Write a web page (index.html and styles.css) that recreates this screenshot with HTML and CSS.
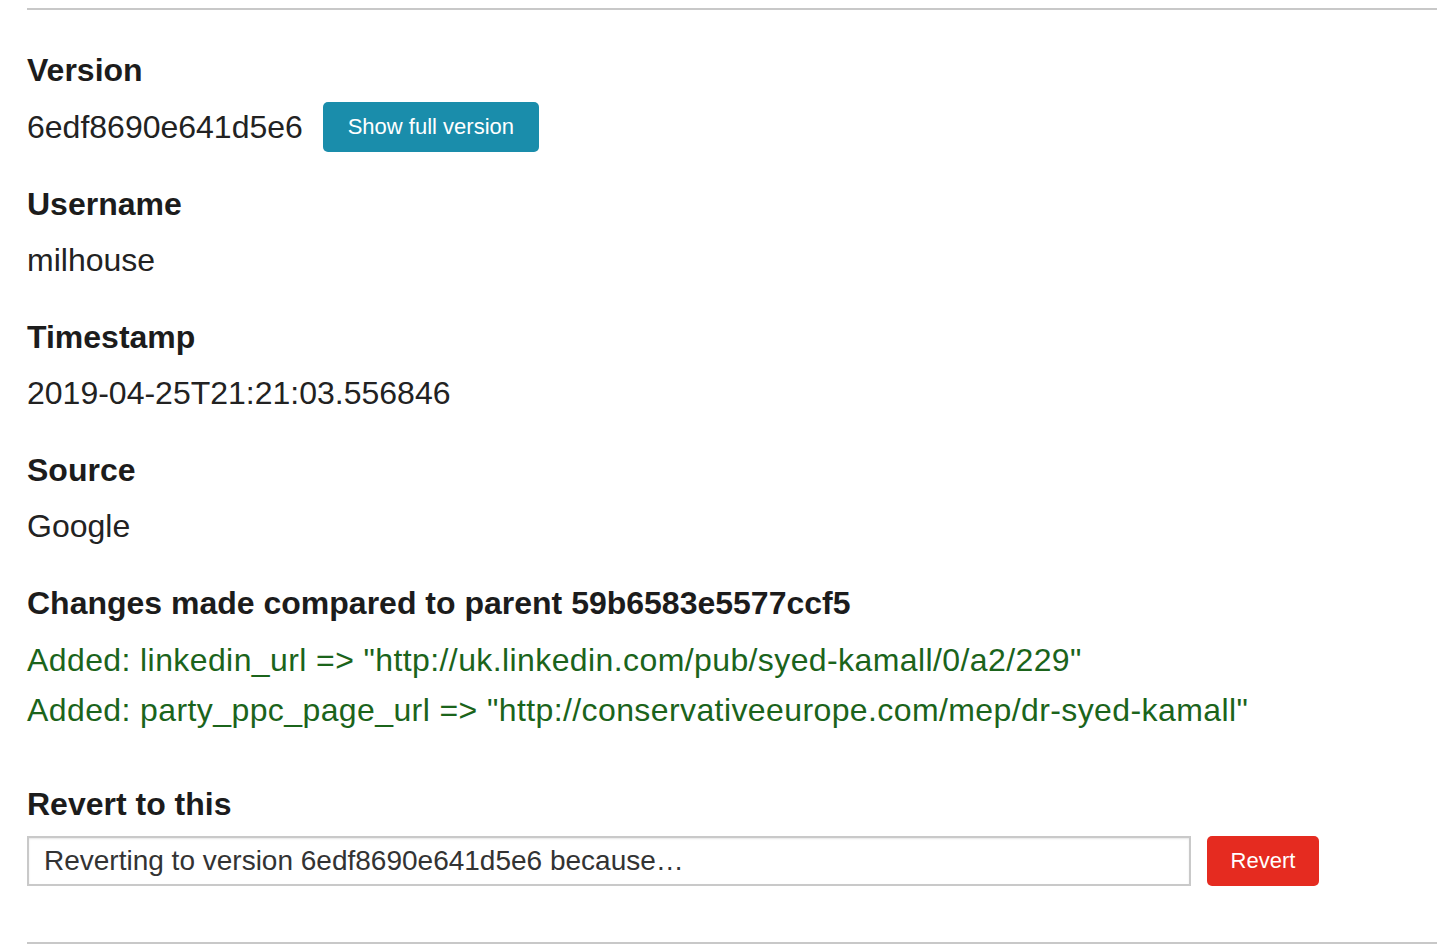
FILE: index.html
```html
<!DOCTYPE html>
<html lang="en">
<head>
<meta charset="utf-8">
<title>Version 6edf8690e641d5e6</title>
<link rel="stylesheet" href="styles.css">
</head>
<body>
<div class="page">
  <hr class="rule rule-top">
  <dl class="details">
    <dt class="label">Version</dt>
    <dd class="value version-row">
      <span class="version-id">6edf8690e641d5e6</span>
      <button class="btn btn-info" type="button">Show full version</button>
    </dd>

    <dt class="label">Username</dt>
    <dd class="value">milhouse</dd>

    <dt class="label">Timestamp</dt>
    <dd class="value">2019-04-25T21:21:03.556846</dd>

    <dt class="label">Source</dt>
    <dd class="value">Google</dd>

    <dt class="label">Changes made compared to parent 59b6583e5577ccf5</dt>
    <dd class="value changes">
      <div class="change-added">Added: linkedin_url =&gt; "http://uk.linkedin.com/pub/syed-kamall/0/a2/229"</div>
      <div class="change-added">Added: party_ppc_page_url =&gt; "http://conservativeeurope.com/mep/dr-syed-kamall"</div>
    </dd>
  </dl>

  <form class="revert">
    <h4 class="label revert-title">Revert to this</h4>
    <div class="revert-row">
      <input class="revert-input" type="text" value="Reverting to version 6edf8690e641d5e6 because…">
      <button class="btn btn-danger" type="button">Revert</button>
    </div>
  </form>
  <hr class="rule rule-bottom">
</div>
</body>
</html>
```

FILE: styles.css
```css
html, body {
  margin: 0;
  padding: 0;
  background: #ffffff;
}

body {
  font-family: "Liberation Sans", Arial, Helvetica, sans-serif;
  color: #222222;
}

.page {
  padding-left: 27px;
  padding-top: 8px;
}

.rule {
  border: 0;
  border-top: 2px solid #c8c8c8;
  margin: 0;
  height: 0;
}

.details {
  margin: 42px 0 0 0;
  padding: 0;
}

.label {
  font-size: 32px;
  line-height: 36px;
  font-weight: bold;
  color: #1c1c1c;
  margin: 0 0 14px 0;
}

.value {
  margin: 0 0 35px 0;
  font-size: 32px;
  line-height: 48px;
  color: #222222;
}

.version-row {
  display: flex;
  align-items: center;
  gap: 20px;
  margin-bottom: 34px;
}

.btn {
  font-family: "Liberation Sans", Arial, Helvetica, sans-serif;
  font-size: 22px;
  line-height: 26px;
  color: #ffffff;
  border: 0;
  border-radius: 5px;
  height: 50px;
  padding: 0;
  cursor: pointer;
}

.btn-info {
  background: #1a8dab;
  width: 216px;
}

.btn-danger {
  background: #e52b20;
  width: 112px;
}

.changes {
  line-height: 50px;
  margin-bottom: 51px;
}

.change-added {
  color: #1b641b;
  letter-spacing: 0.4px;
}

.revert {
  margin: 0;
}

.revert-row {
  display: flex;
  align-items: center;
  gap: 16px;
}

.revert-input {
  box-sizing: border-box;
  flex: 0 0 1164px;
  height: 50px;
  border: 2px solid #c9c9c9;
  box-shadow: inset 0 1px 2px rgba(0, 0, 0, 0.1);
  padding: 0 15px;
  font-family: "Liberation Sans", Arial, Helvetica, sans-serif;
  font-size: 28px;
  color: #333333;
  background: #ffffff;
  margin: 0;
}

.rule-bottom {
  margin-top: 56px;
}
```
